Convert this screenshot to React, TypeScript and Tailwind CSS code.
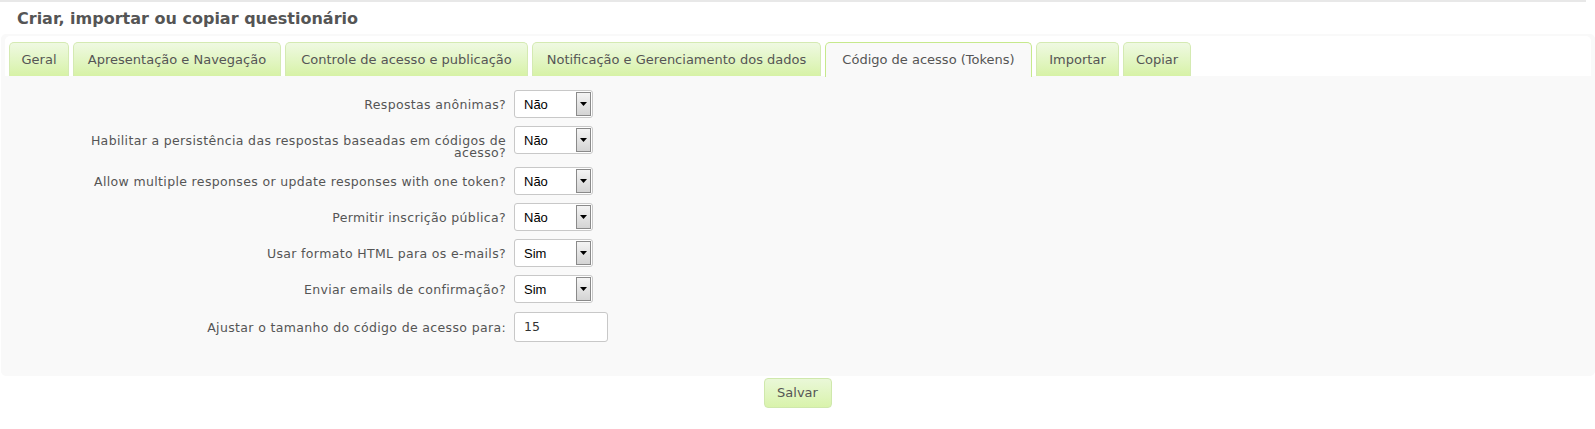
import React from 'react'

const TABS = [
  { label: 'Geral', w: 'w-[60px]' },
  { label: 'Apresentação e Navegação', w: 'w-[208px]' },
  { label: 'Controle de acesso e publicação', w: 'w-[243px]' },
  { label: 'Notificação e Gerenciamento dos dados', w: 'w-[289px]' },
  { label: 'Código de acesso (Tokens)', w: 'w-[207px]', active: true },
  { label: 'Importar', w: 'w-[83px]' },
  { label: 'Copiar', w: 'w-[68px]' },
]

const ROWS: { label: string; value: string }[] = [
  { label: 'Respostas anônimas?', value: 'Não' },
  { label: 'Habilitar a persistência das respostas baseadas em códigos de acesso?', value: 'Não' },
  { label: 'Allow multiple responses or update responses with one token?', value: 'Não' },
  { label: 'Permitir inscrição pública?', value: 'Não' },
  { label: 'Usar formato HTML para os e-mails?', value: 'Sim' },
  { label: 'Enviar emails de confirmação?', value: 'Sim' },
]

function FakeSelect({ value }: { value: string }) {
  return (
    <div className="relative h-[28px] w-[79px] shrink-0 rounded-[3px] border border-[#c8c8c8] bg-white">
      <span className="absolute left-[9px] top-[6px] font-['Liberation_Sans',Arial,sans-serif] text-[13px] leading-[15px] text-black">
        {value}
      </span>
      {/* arrow button */}
      <div className="absolute right-[1px] top-[1px] bottom-[1px] flex w-[15px] items-center justify-center border border-[#8a8a8a] bg-gradient-to-b from-[#f4f4f4] to-[#d4d4d4]">
        <svg width="7" height="4" viewBox="0 0 7 4">
          <path d="M0 0 H7 L3.5 4 Z" fill="#000" />
        </svg>
      </div>
    </div>
  )
}

export default function App() {
  return (
    <div className="min-h-[429px] w-[1595px] bg-white font-['DejaVu_Sans',Verdana,sans-serif]">
      {/* Header */}
      <div className="mr-[9px] border-t-2 border-[#e8e8e8] pl-[17px] pt-[8px] pb-[7px]">
        <h1 className="text-[16px] font-bold leading-[17px] text-[#555]">Criar, importar ou copiar questionário</h1>
      </div>

      {/* Tabs widget */}
      <div className="ml-[1px] rounded-[5px] bg-[#f9f9f9] pt-[2px]">
        <div className="mx-[4px] flex gap-[4px] rounded-t-[5px] bg-white pl-[4px] pt-[6px]">
          {TABS.map((t) =>
            t.active ? (
              <div
                key={t.label}
                className={`${t.w} -mb-px flex h-[35px] items-center justify-center rounded-t-[5px] border border-b-0 border-[#c6e98c] bg-[#f9f9f9] text-[13px] text-[#555]`}
              >
                {t.label}
              </div>
            ) : (
              <div
                key={t.label}
                className={`${t.w} flex h-[34px] items-center justify-center rounded-t-[5px] border border-b-0 border-[#d4eab2] bg-gradient-to-b from-[#eff9e2] to-[#d7f2a6] text-[13px] text-[#555]`}
              >
                {t.label}
              </div>
            ),
          )}
        </div>

        {/* Panel */}
        <div className="pt-[14px] pb-[34px]">
          <ul className="flex flex-col gap-[8px]">
            {ROWS.map((r) => (
              <li key={r.label} className="flex items-start">
                <label className="ml-[60px] mr-[8px] w-[445px] shrink-0 pt-[9px] text-right text-[12.5px] leading-[12px] tracking-[0.35px] text-[#555]">
                  {r.label}
                </label>
                <FakeSelect value={r.value} />
              </li>
            ))}
            <li className="mt-[1px] flex items-start">
              <label className="ml-[60px] mr-[8px] w-[445px] shrink-0 pt-[10px] text-right text-[12.5px] leading-[12px] tracking-[0.35px] text-[#555]">
                Ajustar o tamanho do código de acesso para:
              </label>
              <div className="flex h-[30px] w-[94px] items-center rounded-[3px] border border-[#c8c8c8] bg-white pl-[9px] text-[12.5px] text-[#333]">
                15
              </div>
            </li>
          </ul>
        </div>
      </div>

      {/* Save */}
      <div className="flex justify-center pt-[2px]">
        <button className="h-[30px] w-[68px] rounded-[4px] border border-[#cfe8ac] bg-gradient-to-b from-[#eaf8d8] to-[#d9f3ab] text-[13px] text-[#555]">
          Salvar
        </button>
      </div>
    </div>
  )
}
